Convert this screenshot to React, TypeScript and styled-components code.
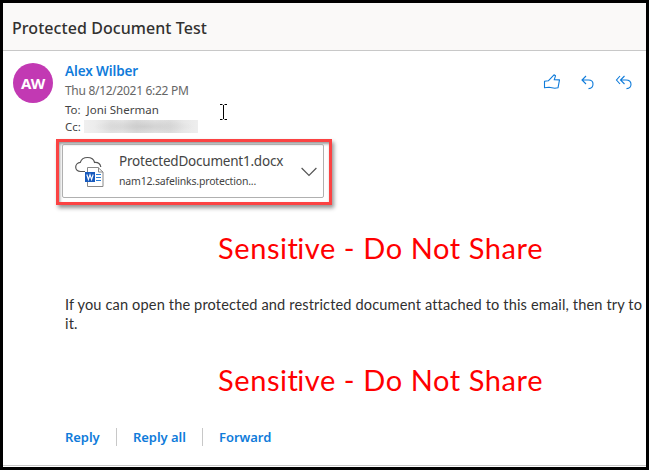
import React from "react";
import styled, { createGlobalStyle } from "styled-components";

const GlobalStyle = createGlobalStyle`
  * { box-sizing: border-box; }
  body { margin: 0; background: #000; }
`;

const ui = `"Noto Sans", "Open Sans", sans-serif`;

const Window = styled.main`
  width: 649px;
  height: 470px;
  border: 3px solid #000;
  background: #fff;
  overflow: hidden;
  font-family: ${ui};
  display: flex;
  flex-direction: column;
`;

const Header = styled.header`
  height: 48px;
  flex: none;
  padding: 2px 9px 0;
  display: flex;
  align-items: center;
  background: #faf9f8;
  border-bottom: 1px solid #c8c8c8;
`;

const Line = styled.div<{ $size: number; $height: number; $color: string; $weight?: number; $spacing?: number }>`
  font-size: ${(p) => p.$size}px;
  line-height: ${(p) => p.$height}px;
  color: ${(p) => p.$color};
  font-weight: ${(p) => p.$weight ?? 400};
  letter-spacing: ${(p) => p.$spacing ?? 0}px;
  white-space: pre;
`;

const Message = styled.section`
  flex: 1;
  display: grid;
  grid-template-columns: 40px 1fr;
  column-gap: 12px;
  padding: 11px 0 0 10px;
  min-height: 0;
  border-bottom: 1px solid #c8c8c8;
  margin-bottom: 1px;
`;

const Avatar = styled.div`
  width: 40px;
  height: 40px;
  margin-top: 1px;
  border-radius: 50%;
  background: #c239b3;
  color: #fff;
  font-weight: 700;
  font-size: 15px;
  letter-spacing: -0.1px;
  display: flex;
  align-items: center;
  justify-content: center;
`;

const Content = styled.div`
  min-width: 0;
`;

const Meta = styled.div`
  display: flex;
  justify-content: space-between;
  height: 77px;
`;

const Sender = styled.div`
  display: flex;
  flex-direction: column;
`;

const Pointer = styled.svg`
  position: absolute;
  left: 219px;
  top: 104px;
`;

const Recipient = styled.div`
  display: flex;
  height: 16px;
`;

const Redacted = styled.div`
  width: 114px;
  height: 13px;
  margin: 1px 0 0 3px;
  background:
    radial-gradient(ellipse 50px 7px at 52% 50%, rgba(190, 190, 190, 0.5), transparent),
    linear-gradient(90deg, #f0f0f0 0, #ececec 10%, #e0e0e0 24%, #e4e4e4 34%, #dadada 46%, #e2e2e2 62%, #dddddd 76%, #e8e8e8 88%, #eeeeee 100%);
`;

const Actions = styled.div`
  display: flex;
  height: 18px;
  margin: 11px 13px 0 0;
  gap: 18px;
`;

const Highlight = styled.div`
  width: 276px;
  height: 66px;
  margin-left: -9px;
  border: 3px solid #fb4343;
  padding: 2px;
  background: #fff;
  box-shadow: 2px 3px 4px rgba(0, 0, 0, 0.42), inset 1px 2px 3px rgba(0, 0, 0, 0.4);
`;

const Attachment = styled.div`
  width: 262px;
  height: 54px;
  margin-left: 1px;
  border: 1px solid #b0b0b0;
  border-radius: 2px;
  display: flex;
  padding: 0 6px 0 12px;
`;

const FileIcon = styled.div`
  width: 30px;
  height: 32px;
  margin-top: 11px;
`;

const FileText = styled.div`
  width: 182px;
  margin-left: 14px;
  padding-top: 6px;
`;

const Chevron = styled.svg`
  flex: none;
  margin-top: 22px;
`;

const Body = styled.article`
  padding-top: 23px;
  font-family: Lato, Carlito, sans-serif;
`;

const Banner = styled.div`
  height: 40px;
  margin-left: 153px;
  font-size: 29px;
  line-height: 40px;
  letter-spacing: 0.59px;
  color: #f00;
  white-space: pre;
`;

const Joined = styled.span`
  letter-spacing: -0.8px;
`;

const Paragraph = styled.p`
  margin: 27px 0 27px;
  font-size: 14.6px;
  line-height: 19px;
  letter-spacing: 0.13px;
  color: #303030;
  white-space: pre;
`;

const Footer = styled.nav`
  display: flex;
  align-items: center;
  height: 18px;
  margin-top: 28px;
`;

const FooterAction = styled.button<{ $width: number }>`
  width: ${(p) => p.$width}px;
  padding: 0;
  border: 0;
  background: none;
  color: #0f7bda;
  font: 600 13px/18px ${ui};
  letter-spacing: -0.05px;
  text-align: left;
  white-space: nowrap;
`;

const Divider = styled.span`
  width: 1px;
  height: 18px;
  margin-right: 16px;
  background: #c8c8c8;
`;

const Warning = () => (
  <Banner>Sensi<Joined>t</Joined>ive - Do Not Share</Banner>
);

const CloudDocument = () => (
  <svg width="30" height="32" viewBox="0 0 30 32" fill="none">
    <path d="M10 15.5H5.5C2.8 15.5 .7 13.6 .7 11.1C.7 8.6 2.8 6.6 5.3 6.4C6.3 3.3 9 1.5 12.5 1.5C16 1.5 18.8 3.3 19.6 6.5C23.2 6.2 25.2 8 25.8 11" stroke="#555" strokeWidth="1.2" />
    <path d="M12.5 11.5H23L28 16V30.5H12.5Z" fill="#fff" stroke="#888" />
    <path d="M23.5 11.5V16H28" stroke="#888" />
    <path d="M21 18.5H26M21 21.5H26M21 24.5H26" stroke="#2b7cd3" strokeWidth="1.1" />
    <rect x="10" y="16" width="10" height="10" fill="#185abd" />
    <path d="M11.8 18.5L13.4 23.5L15 18.8L16.6 23.5L18.2 18.5" stroke="#fff" strokeWidth="1.1" />
  </svg>
);

export default function App() {
  return (
    <>
      <GlobalStyle />
      <Window>
        <Header>
          <Line as="h1" $size={16} $height={24} $color="#323130" $weight={500} $spacing={0.06}>Protected Document Test</Line>
        </Header>
        <Message>
          <Avatar>AW</Avatar>
          <Content>
            <Meta>
              <Sender>
                <Line $size={13.5} $height={19} $color="#0f7bda" $weight={600} $spacing={-0.12}>Alex Wilber</Line>
                <Line $size={12} $height={20} $color="#666" $spacing={-0.3}>Thu 8/12/2021 6:22 PM</Line>
                <Line $size={11.5} $height={18} $color="#444">To:  Joni Sherman</Line>
                <Recipient>
                  <Line $size={11.5} $height={15} $color="#444">Cc:</Line>
                  <Redacted />
                </Recipient>
              </Sender>
              <Actions>
                <svg width="18" height="18" viewBox="0 0 18 18" fill="none" stroke="#0f7bda" strokeWidth="1.1">
                  <path d="M1.5 8.3L5.3 7.8L11 1.8L12.5 2.8L11.2 6.8L16.5 6.9L15 14.8L11.8 15.3L6 14.3L1.5 14.7Z" strokeLinejoin="round" />
                </svg>
                <svg width="18" height="18" viewBox="0 0 18 18" fill="none" stroke="#0f7bda" strokeWidth="1.1">
                  <path d="M7 3L3 7L7 11M3 7H9.5C12.3 7 14 8.7 14 11C14 13.6 12.5 15.5 9.5 15.6" />
                </svg>
                <svg width="18" height="18" viewBox="0 0 18 18" fill="none" stroke="#0f7bda" strokeWidth="1.1">
                  <path d="M5 3L1.5 7L5 11M9.5 3L5.5 7L9.5 11M5.5 7H11C14 7 16 8.7 16 11.2C16 13.6 14.2 15.5 11.5 15.6" />
                </svg>
              </Actions>
            </Meta>
            <Highlight>
              <Attachment>
                <FileIcon><CloudDocument /></FileIcon>
                <FileText>
                  <Line $size={13.5} $height={20} $color="#444" $spacing={-0.22}>ProtectedDocument1.docx</Line>
                  <Line $size={10.5} $height={20} $color="#444" $spacing={-0.18}>nam12.safelinks.protection...</Line>
                </FileText>
                <Chevron width="16" height="10" viewBox="0 0 16 10" fill="none" stroke="#555" strokeWidth="1.2">
                  <path d="M.6 1L8 8.5L15.4 1" />
                </Chevron>
              </Attachment>
            </Highlight>
            <Body>
              <Warning />
              <Paragraph>{"If you can open the protected and restricted document attached to this email, then try to\nit."}</Paragraph>
              <Warning />
            </Body>
            <Footer>
              <FooterAction $width={51}>Reply</FooterAction>
              <Divider />
              <FooterAction $width={69}>Reply all</FooterAction>
              <Divider />
              <FooterAction $width={60}>Forward</FooterAction>
            </Footer>
          </Content>
        </Message>
        <Pointer width="9" height="17" viewBox="0 0 9 17" fill="none" stroke="#000">
          <path d="M1 .5H3.5M5.5 .5H8M4.5 1V15M1 15.5H3.5M5.5 15.5H8" />
        </Pointer>
      </Window>
    </>
  );
}
